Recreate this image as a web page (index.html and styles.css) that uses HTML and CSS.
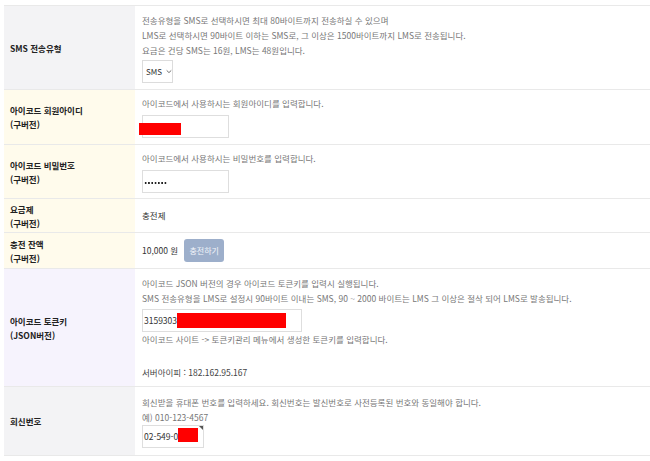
FILE: index.html
```html
<!doctype html>
<html lang="ko">
<head>
  <meta charset="UTF-8" />
  <title>SMS 설정</title>
  <link rel="stylesheet" href="styles.css">
</head>
<body>
  <table class="setting-table">
    <tr class="row-type">
      <th class="label label-gray">SMS 전송유형</th>
      <td class="field">
        <p class="desc">전송유형을 SMS로 선택하시면 최대 80바이트까지 전송하실 수 있으며</p>
        <p class="desc">LMS로 선택하시면 90바이트 이하는 SMS로, 그 이상은 1500바이트까지 LMS로 전송됩니다.</p>
        <p class="desc">요금은 건당 SMS는 16원, LMS는 48원입니다.</p>
        <div class="select-box">
          SMS
          <svg width="7" height="5" viewBox="0 0 7 5"><path d="M0.8 1.2 L3.5 3.8 L6.2 1.2" fill="none" stroke="#444" stroke-width="0.9"/></svg>
        </div>
      </td>
    </tr>
    <tr class="row-id">
      <th class="label label-yellow">아이코드 회원아이디<br>(구버전)</th>
      <td class="field">
        <p class="desc">아이코드에서 사용하시는 회원아이디를 입력합니다.</p>
        <div class="text-input input-id"><span class="redact redact-id"></span></div>
      </td>
    </tr>
    <tr class="row-pw">
      <th class="label label-yellow">아이코드 비밀번호<br>(구버전)</th>
      <td class="field">
        <p class="desc">아이코드에서 사용하시는 비밀번호를 입력합니다.</p>
        <div class="text-input input-id"><span class="pw-dots"></span></div>
      </td>
    </tr>
    <tr class="row-plan">
      <th class="label label-yellow">요금제<br>(구버전)</th>
      <td class="field"><span class="value">충전제</span></td>
    </tr>
    <tr class="row-balance">
      <th class="label label-yellow">충전 잔액<br>(구버전)</th>
      <td class="field">
        <div class="balance">
          <span class="value">10,000 원</span>
          <button class="charge-btn" type="button">충전하기</button>
        </div>
      </td>
    </tr>
    <tr class="row-token">
      <th class="label label-purple">아이코드 토큰키<br>(JSON버전)</th>
      <td class="field">
        <p class="desc">아이코드 JSON 버전의 경우 아이코드 토큰키를 입력시 실행됩니다.</p>
        <p class="desc">SMS 전송유형을 LMS로 설정시 90바이트 이내는 SMS, 90 ~ 2000 바이트는 LMS 그 이상은 절삭 되어 LMS로 발송됩니다.</p>
        <div class="text-input input-token"><span class="input-text">3159303</span><span class="redact redact-token"></span></div>
        <p class="desc">아이코드 사이트 -&gt; 토큰키관리 메뉴에서 생성한 토큰키를 입력합니다.</p>
        <p class="server-ip">서버아이피 : 182.162.95.167</p>
      </td>
    </tr>
    <tr class="row-reply">
      <th class="label label-gray">회신번호</th>
      <td class="field">
        <p class="desc">회신받을 휴대폰 번호를 입력하세요. 회신번호는 발신번호로 사전등록된 번호와 동일해야 합니다.</p>
        <p class="desc">예) 010-123-4567</p>
        <div class="text-input input-phone"><span class="input-text">02-549-0</span><span class="redact redact-phone"></span></div>
      </td>
    </tr>
  </table>
</body>
</html>
```

FILE: styles.css
```css
body,
html {
  background-color: #ffffff;
  margin: 0;
  padding: 0;
}

body {
  padding: 5px 0 0 4px;
  font-family: "Noto Sans CJK KR", "Noto Sans", sans-serif;
  color: #333;
}

.setting-table {
  width: 646px;
  border-collapse: collapse;
  table-layout: fixed;
}

.setting-table tr {
  border-top: 1px solid #e9e9e9;
  border-bottom: 1px solid #e9e9e9;
}

/* label column */
.label {
  width: 125px;
  padding: 0 0 0 6px;
  text-align: left;
  vertical-align: middle;
  font-size: 8.5px;
  line-height: 14px;
  font-weight: bold;
  color: #222;
}

.label-gray {
  background-color: #f3f3f5;
}

.label-yellow {
  background-color: #fffbec;
}

.label-purple {
  background-color: #f6f3fd;
}

/* value column */
.field {
  padding: 0 0 0 7px;
  vertical-align: middle;
  font-size: 8.5px;
  line-height: 15px;
}

.desc {
  margin: 0;
  color: #777;
  white-space: nowrap;
}

.value {
  color: #333;
}

.row-type { height: 84px; }
.row-id { height: 55px; }
.row-pw { height: 54px; }
.row-plan { height: 34px; }
.row-balance { height: 36px; }
.row-token { height: 118px; }
.row-reply { height: 69px; }

.select-box {
  display: flex;
  align-items: center;
  gap: 4px;
  box-sizing: border-box;
  width: 31px;
  height: 23px;
  margin-top: 2px;
  padding-left: 3px;
  border: 1px solid #dcdcdc;
  background: #fff;
  color: #333;
  font-size: 8px;
}

.text-input {
  display: flex;
  align-items: center;
  box-sizing: border-box;
  height: 23px;
  border: 1px solid #dedede;
  background: #fff;
  color: #333;
  font-size: 8.5px;
}

.input-id {
  width: 87px;
  margin-top: 4px;
}

.input-token {
  width: 160px;
  margin-top: 3px;
}

.input-phone {
  width: 62px;
  margin-top: 0;
  position: relative;
}

/* resize corner mark */
.input-phone::after {
  content: "";
  position: absolute;
  top: 0;
  right: 0;
  border-top: 4px solid #555;
  border-left: 4px solid transparent;
}

.input-text {
  padding-left: 1px;
}

.redact {
  display: inline-block;
  background: #ff0000;
}

.redact-id {
  width: 42px;
  height: 12px;
  margin: 4px 0 0 -4px;
}

.redact-token {
  width: 109px;
  height: 15px;
}

.redact-phone {
  width: 20px;
  height: 14px;
  margin-top: -2px;
}

.pw-dots {
  width: 23px;
  height: 2px;
  margin: 3px 0 0 1px;
  background-image: radial-gradient(circle, #222 0.9px, transparent 1.1px);
  background-size: 3.3px 2px;
}

.balance {
  display: flex;
  align-items: center;
  gap: 6px;
}

.charge-btn {
  width: 40px;
  height: 23px;
  padding: 0;
  border: none;
  border-radius: 3px;
  background-color: #9dafcb;
  color: #f2f5fa;
  font-family: inherit;
  font-size: 8px;
}

.server-ip {
  margin: 18px 0 0;
  color: #444;
}
```
